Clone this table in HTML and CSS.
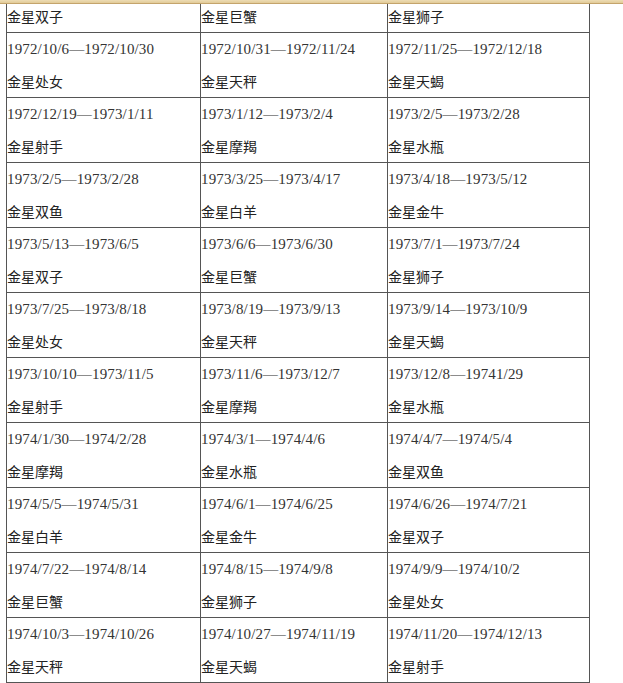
FILE: index.html
```html
<!DOCTYPE html>
<html lang="zh-CN">
<head>
<meta charset="utf-8">
<title>金星星座表</title>
<link rel="stylesheet" href="styles.css">
</head>
<body>
<div class="topbar"></div>
<table class="venus">
<colgroup><col class="c1"><col class="c2"><col class="c3"></colgroup>
<tbody>
<tr class="first"><td><div class="ln">金星双子</div></td><td><div class="ln">金星巨蟹</div></td><td><div class="ln">金星狮子</div></td></tr>
<tr><td><div class="ln d">1972/10/6—1972/10/30</div><div class="ln">金星处女</div></td><td><div class="ln d">1972/10/31—1972/11/24</div><div class="ln">金星天秤</div></td><td><div class="ln d">1972/11/25—1972/12/18</div><div class="ln">金星天蝎</div></td></tr>
<tr><td><div class="ln d">1972/12/19—1973/1/11</div><div class="ln">金星射手</div></td><td><div class="ln d">1973/1/12—1973/2/4</div><div class="ln">金星摩羯</div></td><td><div class="ln d">1973/2/5—1973/2/28</div><div class="ln">金星水瓶</div></td></tr>
<tr><td><div class="ln d">1973/2/5—1973/2/28</div><div class="ln">金星双鱼</div></td><td><div class="ln d">1973/3/25—1973/4/17</div><div class="ln">金星白羊</div></td><td><div class="ln d">1973/4/18—1973/5/12</div><div class="ln">金星金牛</div></td></tr>
<tr><td><div class="ln d">1973/5/13—1973/6/5</div><div class="ln">金星双子</div></td><td><div class="ln d">1973/6/6—1973/6/30</div><div class="ln">金星巨蟹</div></td><td><div class="ln d">1973/7/1—1973/7/24</div><div class="ln">金星狮子</div></td></tr>
<tr><td><div class="ln d">1973/7/25—1973/8/18</div><div class="ln">金星处女</div></td><td><div class="ln d">1973/8/19—1973/9/13</div><div class="ln">金星天秤</div></td><td><div class="ln d">1973/9/14—1973/10/9</div><div class="ln">金星天蝎</div></td></tr>
<tr><td><div class="ln d">1973/10/10—1973/11/5</div><div class="ln">金星射手</div></td><td><div class="ln d">1973/11/6—1973/12/7</div><div class="ln">金星摩羯</div></td><td><div class="ln d">1973/12/8—19741/29</div><div class="ln">金星水瓶</div></td></tr>
<tr><td><div class="ln d">1974/1/30—1974/2/28</div><div class="ln">金星摩羯</div></td><td><div class="ln d">1974/3/1—1974/4/6</div><div class="ln">金星水瓶</div></td><td><div class="ln d">1974/4/7—1974/5/4</div><div class="ln">金星双鱼</div></td></tr>
<tr><td><div class="ln d">1974/5/5—1974/5/31</div><div class="ln">金星白羊</div></td><td><div class="ln d">1974/6/1—1974/6/25</div><div class="ln">金星金牛</div></td><td><div class="ln d">1974/6/26—1974/7/21</div><div class="ln">金星双子</div></td></tr>
<tr><td><div class="ln d">1974/7/22—1974/8/14</div><div class="ln">金星巨蟹</div></td><td><div class="ln d">1974/8/15—1974/9/8</div><div class="ln">金星狮子</div></td><td><div class="ln d">1974/9/9—1974/10/2</div><div class="ln">金星处女</div></td></tr>
<tr><td><div class="ln d">1974/10/3—1974/10/26</div><div class="ln">金星天秤</div></td><td><div class="ln d">1974/10/27—1974/11/19</div><div class="ln">金星天蝎</div></td><td><div class="ln d">1974/11/20—1974/12/13</div><div class="ln">金星射手</div></td></tr>
</tbody>
</table>
</body>
</html>
```
FILE: styles.css
```css
html, body {
  margin: 0;
  padding: 0;
  background: #ffffff;
}
body {
  font-family: "Noto Sans CJK SC", sans-serif;
  font-size: 14px;
  color: #222;
}
.topbar {
  position: fixed;
  top: 0;
  left: 0;
  right: 0;
  height: 3px;
  background: linear-gradient(#eddcb4, #e2cb98);
  border-bottom: 1px solid #c4a46c;
  z-index: 2;
}
.venus {
  margin-left: 6px;
  border-collapse: collapse;
  table-layout: fixed;
  width: 583px;
}
.c1 { width: 194px; }
.c2 { width: 187px; }
.c3 { width: 202px; }
.venus td {
  border: 1px solid #555;
  padding: 0;
  vertical-align: top;
  white-space: nowrap;
  overflow: hidden;
}
.venus tr.first td {
  border-top: none;
}
.ln {
  height: 32px;
  line-height: 32px;
}
.d {
  font-family: "Liberation Serif", "Noto Sans CJK SC", serif;
  font-size: 15px;
  letter-spacing: 0.15px;
  color: #333;
}
```
